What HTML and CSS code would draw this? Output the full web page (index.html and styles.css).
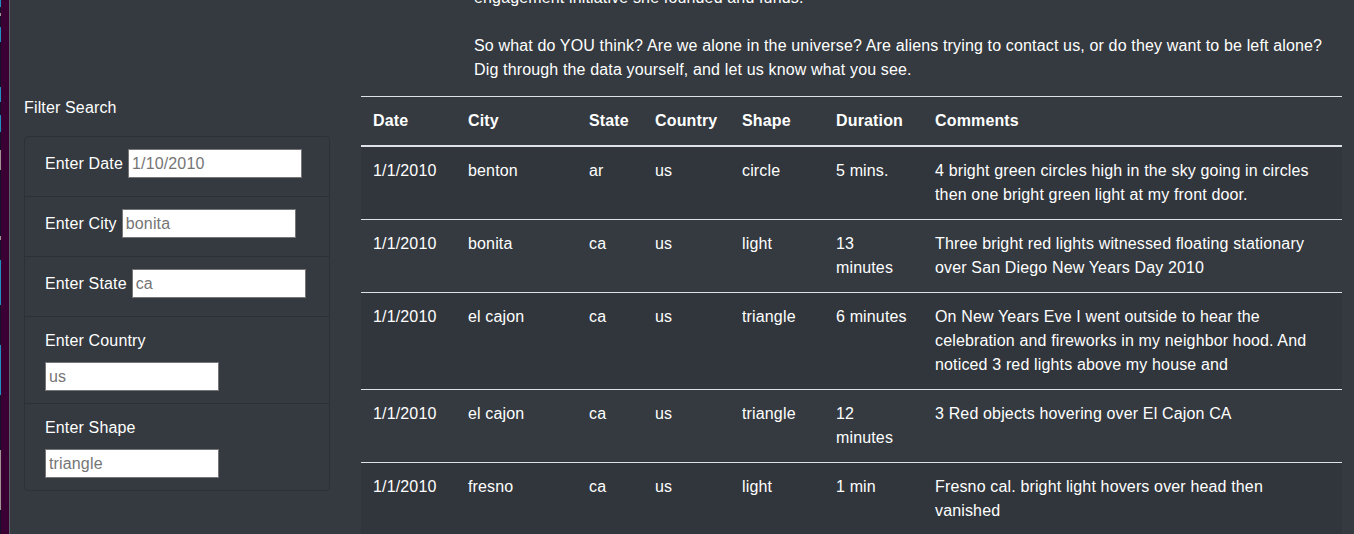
FILE: index.html
```html
<!DOCTYPE html>
<html lang="en">
<head>
<meta charset="utf-8">
<title>UFO Sightings</title>
<link rel="stylesheet" href="styles.css">
</head>
<body>
<div class="strip"><div class="strip-edge"></div></div>
<div class="page">
  <section class="intro">
    <p>engagement initiative she founded and funds.</p>
    <p>So what do YOU think? Are we alone in the universe? Are aliens trying to contact us, or do they want to be left alone?<br>Dig through the data yourself, and let us know what you see.</p>
  </section>
  <div class="content">
    <aside class="sidebar">
      <h5 class="filter-title">Filter Search</h5>
      <ul class="filters">
        <li class="filter filter-inline"><label for="datetime">Enter Date</label><input id="datetime" type="text" placeholder="1/10/2010"></li>
        <li class="filter filter-inline"><label for="city">Enter City</label><input id="city" type="text" placeholder="bonita"></li>
        <li class="filter filter-inline"><label for="state">Enter State</label><input id="state" type="text" placeholder="ca"></li>
        <li class="filter filter-stacked"><label for="country">Enter Country</label><input id="country" type="text" placeholder="us"></li>
        <li class="filter filter-stacked"><label for="shape">Enter Shape</label><input id="shape" type="text" placeholder="triangle"></li>
      </ul>
    </aside>
    <main class="main">
      <table class="ufo-table">
        <colgroup>
          <col class="c-date"><col class="c-city"><col class="c-state"><col class="c-country"><col class="c-shape"><col class="c-duration"><col class="c-comments">
        </colgroup>
        <thead>
          <tr><th>Date</th><th>City</th><th>State</th><th>Country</th><th>Shape</th><th>Duration</th><th>Comments</th></tr>
        </thead>
        <tbody>
          <tr><td>1/1/2010</td><td>benton</td><td>ar</td><td>us</td><td>circle</td><td>5 mins.</td><td>4 bright green circles high in the sky going in circles then one bright green light at my front door.</td></tr>
          <tr><td>1/1/2010</td><td>bonita</td><td>ca</td><td>us</td><td>light</td><td>13 minutes</td><td>Three bright red lights witnessed floating stationary over San Diego New Years Day 2010</td></tr>
          <tr><td>1/1/2010</td><td>el cajon</td><td>ca</td><td>us</td><td>triangle</td><td>6 minutes</td><td>On New Years Eve I went outside to hear the celebration and fireworks in my neighbor hood. And noticed 3 red lights above my house and</td></tr>
          <tr><td>1/1/2010</td><td>el cajon</td><td>ca</td><td>us</td><td>triangle</td><td>12 minutes</td><td>3 Red objects hovering over El Cajon CA</td></tr>
          <tr><td>1/1/2010</td><td>fresno</td><td>ca</td><td>us</td><td>light</td><td>1 min</td><td>Fresno cal. bright light hovers over head then vanished</td></tr>
        </tbody>
      </table>
    </main>
  </div>
</div>
</body>
</html>
```

FILE: styles.css
```css
* { box-sizing: border-box; }

html, body {
  margin: 0;
  height: 534px;
  overflow: hidden;
}

body {
  display: flex;
  background: #343a40;
  color: #fff;
  font-family: "Liberation Sans", Arial, sans-serif;
  font-size: 16px;
  line-height: 1.5;
  letter-spacing: 0.15px;
}

.strip {
  width: 10px;
  flex: 0 0 10px;
  display: flex;
  background: #3a0033;
  border-right: 1px solid #5b6067;
}

.strip-edge {
  width: 1px;
  background: linear-gradient(to bottom,
    #1f8fc2 0, #1f8fc2 7px,
    #17102c 7px, #17102c 13px,
    #a39395 13px, #a39395 16px,
    #17102c 16px, #17102c 27px,
    #1f8fc2 27px, #1f8fc2 42px,
    #17102c 42px, #17102c 87px,
    #1f8fc2 87px, #1f8fc2 102px,
    #17102c 102px, #17102c 115px,
    #1f8fc2 115px, #1f8fc2 132px,
    #17102c 132px, #17102c 150px,
    #a39395 150px, #a39395 170px,
    #17102c 170px, #17102c 236px,
    #a39395 236px, #a39395 240px,
    #17102c 240px, #17102c 260px,
    #1f8fc2 260px, #1f8fc2 305px,
    #17102c 305px, #17102c 345px,
    #1f8fc2 345px, #1f8fc2 395px,
    #17102c 395px, #17102c 450px,
    #a39395 450px, #a39395 510px,
    #17102c 510px);
}

.page {
  flex: 1;
  min-width: 0;
}

.intro {
  margin-top: -14px;
  padding-left: 464px;
}

.intro p {
  margin: 0 0 24px;
}

.intro p + p {
  margin-bottom: 14px;
}

.content {
  display: flex;
  align-items: flex-start;
}

.sidebar {
  flex: 0 0 351px;
  padding-left: 14px;
}

.filter-title {
  margin: 0 0 16px;
  font-size: 16px;
  font-weight: 400;
  line-height: 24px;
}

.filters {
  list-style: none;
  margin: 0;
  padding: 0;
  width: 306px;
  border: 1px solid #2c3136;
  border-radius: 4px;
}

.filter {
  display: flex;
  padding: 12px 20px;
  border-top: 1px solid #2c3136;
}

.filter:first-child {
  border-top: 0;
}

.filter-inline {
  align-items: center;
  gap: 5px;
  padding-bottom: 18px;
}

.filter-stacked {
  flex-direction: column;
  align-items: flex-start;
  gap: 9px;
}

.filter label {
  white-space: nowrap;
}

.filter input {
  width: 174px;
  height: 29px;
  margin: 0;
  padding: 1px 3px;
  border: 1px solid #767676;
  border-radius: 0;
  background: #fff;
  color: #222;
  font-family: "Liberation Sans", Arial, sans-serif;
  font-size: 16px;
  letter-spacing: 0.15px;
}

.filter input::placeholder {
  color: #757575;
  opacity: 1;
}

.main {
  flex: 1;
  padding-right: 12px;
}

.ufo-table {
  width: 981px;
  border-collapse: collapse;
  table-layout: fixed;
  color: #fff;
}

.c-date { width: 95px; }
.c-city { width: 121px; }
.c-state { width: 66px; }
.c-country { width: 87px; }
.c-shape { width: 94px; }
.c-duration { width: 99px; }
.c-comments { width: 419px; }

.ufo-table th,
.ufo-table td {
  padding: 12px;
  text-align: left;
  vertical-align: top;
  border-top: 1px solid #dee2e6;
}

.ufo-table th {
  font-weight: 700;
  vertical-align: bottom;
  border-bottom: 2px solid #dee2e6;
}

.ufo-table tbody tr:nth-child(odd) {
  background: #31363c;
}
```
